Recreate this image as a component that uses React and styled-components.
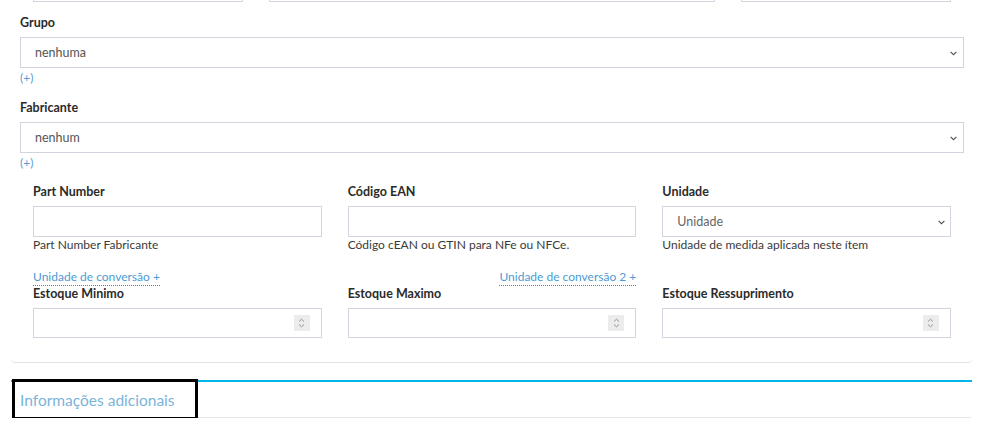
import styled, { createGlobalStyle } from 'styled-components'

const GlobalStyle = createGlobalStyle`
  html, body {
    margin: 0;
    padding: 0;
    background: #fff;
    overflow: hidden;
  }
  body {
    font-family: Lato, "Liberation Sans", sans-serif;
    color: #333;
  }
  * {
    box-sizing: border-box;
  }
`

const Page = styled.div`
  padding: 0 10px 0 11px;
`

const Card = styled.div`
  padding: 0 8px 0 9px;
  border-bottom: 1px solid #e3e3e7;
  border-radius: 0 0 4px 4px;
  padding-bottom: 24px;
`

const Row = styled.div`
  display: grid;
  grid-template-columns: ${(props) => props.$cols || '1fr 1fr 1fr'};
  margin-top: ${(props) => props.$top || 0}px;
`

const Col = styled.div`
  padding: 0 13px;
  display: flex;
  flex-direction: column;
  align-items: ${(props) => props.$align || 'stretch'};
`

const TopRow = styled(Row)`
  margin-top: -29px;
`

const Group = styled.div`
  margin-top: ${(props) => props.$top || 0}px;
`

const Label = styled.label`
  display: block;
  font-size: 12.5px;
  font-weight: 700;
  line-height: 16px;
  color: #2b2b2b;
  margin-bottom: 6px;
`

const Input = styled.input`
  display: block;
  width: 100%;
  height: ${(props) => props.$h || 31}px;
  border: 1px solid #d4d4de;
  border-radius: 0;
  background: #fff;
  font: inherit;
  outline: none;
`

const Field = styled.div`
  position: relative;
`

const Select = styled.select`
  display: block;
  width: 100%;
  height: 31px;
  appearance: none;
  border: 1px solid #d4d4de;
  border-radius: 0;
  background: #fff;
  padding: 0 24px 0 14px;
  font-family: Lato, "Liberation Sans", sans-serif;
  font-size: 12.5px;
  color: ${(props) => (props.$muted ? '#666' : '#555')};
  outline: none;
`

const Chevron = styled.svg`
  position: absolute;
  right: ${(props) => props.$right || 7}px;
  top: 50%;
  margin-top: -2px;
  width: 7px;
  height: 5px;
  pointer-events: none;
`

const Spinner = styled.span`
  position: absolute;
  right: 12px;
  top: 7px;
  width: 16px;
  height: 16px;
  background: #ececec;
  display: flex;
  align-items: center;
  justify-content: center;
`

const AddLink = styled.a`
  display: block;
  font-size: 12px;
  line-height: 14px;
  margin-top: 3px;
  color: #5b9bd5;
  text-decoration: none;
`

const Help = styled.div`
  font-size: 12px;
  line-height: 16px;
  color: #3a3a3a;
`

const ConvLink = styled.a`
  font-size: 12px;
  color: #4a9bd6;
  text-decoration: none;
  border-bottom: 1px dotted #6a6ae0;
  line-height: 14px;
  padding-bottom: 1px;
`

const PanelHeader = styled.div`
  margin-top: 17px;
  border-top: 2px solid #00b6e8;
  border-bottom: 1px solid #e3e3e7;
  border-radius: 0 0 3px 3px;
  height: 38px;
  display: flex;
  align-items: stretch;
`

const PanelTitle = styled.div`
  margin-left: 4px;
  width: 180px;
  padding: 0 5px;
  display: flex;
  align-items: center;
  font-size: 15.5px;
  color: #7ab4da;
  outline: 3px solid #000;
`

function Caret({ right }) {
  return (
    <Chevron $right={right} viewBox="0 0 7 5">
      <path d="M0.6 0.8 L3.5 3.7 L6.4 0.8" fill="none" stroke="#555" strokeWidth="1.2" />
    </Chevron>
  )
}

function SelectField({ value, muted, right }) {
  return (
    <Field>
      <Select $muted={muted} defaultValue={value}>
        <option>{value}</option>
      </Select>
      <Caret right={right} />
    </Field>
  )
}

function NumberField() {
  return (
    <Field>
      <Input type="text" $h={30} />
      <Spinner>
        <svg width="7" height="10" viewBox="0 0 7 10">
          <path d="M1 3.5 L3.5 1.2 L6 3.5 M1 6.5 L3.5 8.8 L6 6.5" fill="none" stroke="#8a8a8a" strokeWidth="0.9" />
        </svg>
      </Spinner>
    </Field>
  )
}

export default function App() {
  return (
    <>
      <GlobalStyle />
      <Page>
        <Card>
          <TopRow $cols="1fr 2fr 1fr">
            <Col><Input /></Col>
            <Col><Input /></Col>
            <Col><Input /></Col>
          </TopRow>

          <Group $top={13}>
            <Label>Grupo</Label>
            <SelectField value="nenhuma" />
            <AddLink href="#">(+)</AddLink>
          </Group>

          <Group $top={15}>
            <Label>Fabricante</Label>
            <SelectField value="nenhum" />
            <AddLink href="#">(+)</AddLink>
          </Group>

          <Row $top={14}>
            <Col>
              <Label>Part Number</Label>
              <Input />
              <Help>Part Number Fabricante</Help>
            </Col>
            <Col>
              <Label>Código EAN</Label>
              <Input />
              <Help>Código cEAN ou GTIN para NFe ou NFCe.</Help>
            </Col>
            <Col>
              <Label>Unidade</Label>
              <SelectField value="Unidade" muted right={6} />
              <Help>Unidade de medida aplicada neste ítem</Help>
            </Col>
          </Row>

          <Row $top={17}>
            <Col $align="flex-start">
              <ConvLink href="#">Unidade de conversão +</ConvLink>
            </Col>
            <Col $align="flex-end">
              <ConvLink href="#">Unidade de conversão 2 +</ConvLink>
            </Col>
            <Col />
          </Row>

          <Row>
            <Col>
              <Label>Estoque Minimo</Label>
              <NumberField />
            </Col>
            <Col>
              <Label>Estoque Maximo</Label>
              <NumberField />
            </Col>
            <Col>
              <Label>Estoque Ressuprimento</Label>
              <NumberField />
            </Col>
          </Row>
        </Card>

        <PanelHeader>
          <PanelTitle>Informações adicionais</PanelTitle>
        </PanelHeader>
      </Page>
    </>
  )
}
